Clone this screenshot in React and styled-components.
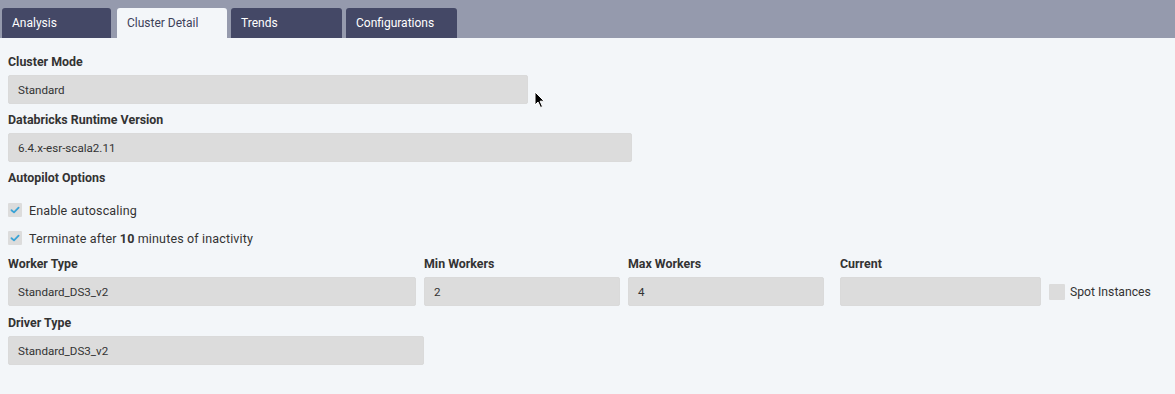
import React from 'react';
import styled, { createGlobalStyle } from 'styled-components';

const GlobalStyle = createGlobalStyle`
	html, body {
		margin: 0;
		padding: 0;
		background: #f3f6f9;
		font-family: Roboto, "Liberation Sans", Arial, sans-serif;
		color: #333;
	}
`;

const Page = styled.div`
	position: relative;
	min-height: 394px;
	display: flex;
	flex-direction: column;
`;

const TabBar = styled.div`
	display: flex;
	align-items: flex-end;
	height: 38px;
	padding: 0 0 0 2px;
	background-color: #959aad;
	box-sizing: border-box;
`;

const Tab = styled.div`
	width: ${(props) => props.width}px;
	margin-right: ${(props) => props.gap}px;
	height: 30px;
	box-sizing: border-box;
	padding: 0 10px;
	display: flex;
	align-items: center;
	border-radius: 3px 3px 0 0;
	font-size: 12px;
	background-color: ${(props) => (props.active ? '#f3f6f9' : '#444866')};
	color: ${(props) => (props.active ? '#3d4159' : '#ffffff')};
`;

const Panel = styled.div`
	flex: 1;
	display: flex;
	flex-direction: column;
	padding: 16px 8px 20px;
	background-color: #f3f6f9;
`;

const Label = styled.div`
	font-size: 12.4px;
	font-weight: 700;
	line-height: 16px;
	height: 16px;
	margin-bottom: 5px;
	color: #333;
	white-space: nowrap;
`;

const Field = styled.div`
	display: flex;
	flex-direction: column;
	margin-bottom: ${(props) => (props.last ? 0 : 8)}px;
`;

const Input = styled.div`
	width: ${(props) => (props.width ? `${props.width}px` : '100%')};
	height: 29px;
	box-sizing: border-box;
	padding: 0 9px;
	display: flex;
	align-items: center;
	background-color: #dcdcdc;
	border: 1px solid #dadada;
	border-radius: 2px;
	font-size: 11.6px;
	color: #333;
`;

const CheckList = styled.div`
	display: flex;
	flex-direction: column;
	padding: 4px 0;
	margin-top: -7px;
`;

const CheckRow = styled.div`
	display: flex;
	align-items: center;
	height: 28px;
	gap: 7px;
	font-size: 12.5px;
	color: #333;
	white-space: nowrap;
	letter-spacing: 0.15px;
`;

const Box = styled.span`
	width: ${(props) => props.size}px;
	height: ${(props) => props.size}px;
	flex: none;
	display: flex;
	align-items: center;
	justify-content: center;
	background-color: #dcdcdc;
	border-radius: 1px;
`;

const WorkerRow = styled.div`
	display: grid;
	grid-template-columns: 408px 196px 196px 209px auto;
	column-gap: 8px;
	align-items: end;
	margin-bottom: 9px;
`;

const CurrentField = styled(Field)`
	margin-left: 8px;
	margin-bottom: 0;
`;

const SpotRow = styled(CheckRow)`
	height: 29px;
	gap: 5px;
	font-size: 12.2px;
	letter-spacing: 0;
`;

const Pointer = styled.svg`
	position: absolute;
	left: 534px;
	top: 91px;
`;

function Check() {
	return (
		<svg width="10" height="8" viewBox="0 0 10 8">
			<path d="M1.5 4.2 L4 6.4 L8.6 1.6" fill="none" stroke="#3aa3d6" strokeWidth="1.8" strokeLinecap="round" strokeLinejoin="round" />
		</svg>
	);
}

const TABS = [
	{ name: 'Analysis', width: 109, gap: 6 },
	{ name: 'Cluster Detail', width: 110, gap: 4, active: true },
	{ name: 'Trends', width: 111, gap: 4 },
	{ name: 'Configurations', width: 111, gap: 0 },
];

export default function App() {
	return (
		<Page>
			<GlobalStyle />
			<TabBar>
				{TABS.map((tab) => (
					<Tab key={tab.name} width={tab.width} gap={tab.gap} active={tab.active}>
						{tab.name}
					</Tab>
				))}
			</TabBar>
			<Panel>
				<Field>
					<Label>Cluster Mode</Label>
					<Input width={520}>Standard</Input>
				</Field>
				<Field>
					<Label>Databricks Runtime Version</Label>
					<Input width={624}>6.4.x-esr-scala2.11</Input>
				</Field>
				<Field>
					<Label>Autopilot Options</Label>
				</Field>
				<CheckList>
					<CheckRow>
						<Box size={14}>
							<Check />
						</Box>
						Enable autoscaling
					</CheckRow>
					<CheckRow>
						<Box size={14}>
							<Check />
						</Box>
						<span>
							Terminate after <b>10</b> minutes of inactivity
						</span>
					</CheckRow>
				</CheckList>
				<WorkerRow>
					<Field last>
						<Label>Worker Type</Label>
						<Input>Standard_DS3_v2</Input>
					</Field>
					<Field last>
						<Label>Min Workers</Label>
						<Input>2</Input>
					</Field>
					<Field last>
						<Label>Max Workers</Label>
						<Input>4</Input>
					</Field>
					<CurrentField>
						<Label>Current</Label>
						<Input />
					</CurrentField>
					<SpotRow>
						<Box size={16} />
						Spot Instances
					</SpotRow>
				</WorkerRow>
				<Field last>
					<Label>Driver Type</Label>
					<Input width={416}>Standard_DS3_v2</Input>
				</Field>
			</Panel>
			<Pointer width="12" height="18" viewBox="0 0 12 18">
				<path d="M1 1 L1 14 L4 11 L6.5 16.5 L8.5 15.6 L6.1 10.2 L10.2 10.2 Z" fill="#000" stroke="#fff" strokeWidth="1" strokeLinejoin="round" />
			</Pointer>
		</Page>
	);
}
